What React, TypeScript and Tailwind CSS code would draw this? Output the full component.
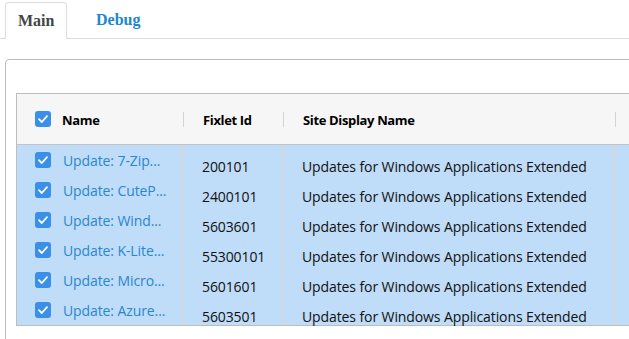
import React from "react";

const rows = [
  { name: "Update: 7-Zip...", id: "200101" },
  { name: "Update: CuteP...", id: "2400101" },
  { name: "Update: Wind...", id: "5603601" },
  { name: "Update: K-Lite...", id: "55300101" },
  { name: "Update: Micro...", id: "5601601" },
  { name: "Update: Azure...", id: "5603501" },
];

function Check() {
  return (
    <div className="w-[16px] h-[16px] rounded-[3px] bg-[#3a8fe8] flex items-center justify-center shrink-0">
      <svg width="12" height="12" viewBox="0 0 12 12" fill="none">
        <path d="M2 6.2 L4.8 9 L10 3.2" stroke="white" strokeWidth="1.8" strokeLinecap="round" strokeLinejoin="round" />
      </svg>
    </div>
  );
}

export default function App() {
  return (
    <div
      className="w-[629px] h-[339px] overflow-hidden bg-white relative"
      style={{ fontFamily: '"Open Sans", "Noto Sans", sans-serif' }}
    >
      {/* Tabs */}
      <div className="h-[39px] border-b border-[#dddddd] pl-[5px] pt-[2px] flex items-end">
        <div
          className="w-[62px] h-[37px] -mb-[1px] border border-b-0 border-[#dddddd] rounded-t-[4px] bg-white flex items-center pl-[12px] text-[16px] font-bold text-[#444444]"
          style={{ fontFamily: '"Liberation Serif", serif' }}
        >
          Main
        </div>
        <div
          className="h-[36px] flex items-center ml-[29px] text-[16px] font-bold text-[#1d87d1]"
          style={{ fontFamily: '"Liberation Serif", serif' }}
        >
          Debug
        </div>
      </div>

      {/* Panel */}
      <div className="ml-[5px] mt-[20px] w-[700px] h-[300px] border border-[#bcbcbc] rounded-[4px] pl-[10px] pt-[33px]">
        <div className="w-[700px] border-l border-t border-b border-[#bdbdbd]">
          {/* Header */}
          <div className="h-[51px] bg-[#f6f6f6] border-b border-[#c4c4c4] flex text-[13px] font-bold text-black tracking-[-0.35px]">
            <div className="w-[167px] flex items-center pl-[18px] relative">
              <Check />
              <span className="ml-[11px] mt-[3px]">Name</span>
              <div className="absolute right-0 top-[18px] w-px h-[15px] bg-[#d4d4d4]" />
            </div>
            <div className="w-[100px] flex items-center pl-[19px] relative">
              <span className="mt-[3px]">Fixlet Id</span>
              <div className="absolute right-0 top-[18px] w-px h-[15px] bg-[#d4d4d4]" />
            </div>
            <div className="w-[332px] flex items-center pl-[19px] relative">
              <span className="mt-[3px]">Site Display Name</span>
              <div className="absolute right-0 top-[18px] w-px h-[15px] bg-[#d4d4d4]" />
            </div>
            <div className="flex-1" />
          </div>
          {/* Rows */}
          {rows.map((r) => (
            <div key={r.id} className="h-[30px] bg-[#bfdcf8] flex text-[14px] tracking-[-0.1px]">
              <div className="w-[167px] border-r border-[#e2d4c4] flex items-start pl-[18px] pt-[7px]">
                <Check />
                <span className="ml-[12px] mt-[1px] whitespace-nowrap text-[#2a87cf] leading-[16px]">
                  {r.name}
                </span>
              </div>
              <div className="w-[100px] border-r border-[#e2d4c4] pl-[18px] pt-[14px] leading-[16px] text-[#111111]">
                {r.id}
              </div>
              <div className="w-[332px] border-r border-[#e2d4c4] pl-[18px] pt-[14px] leading-[16px] text-[#111111] whitespace-nowrap">
                Updates for Windows Applications Extended
              </div>
              <div className="flex-1" />
            </div>
          ))}
        </div>
      </div>
    </div>
  );
}
